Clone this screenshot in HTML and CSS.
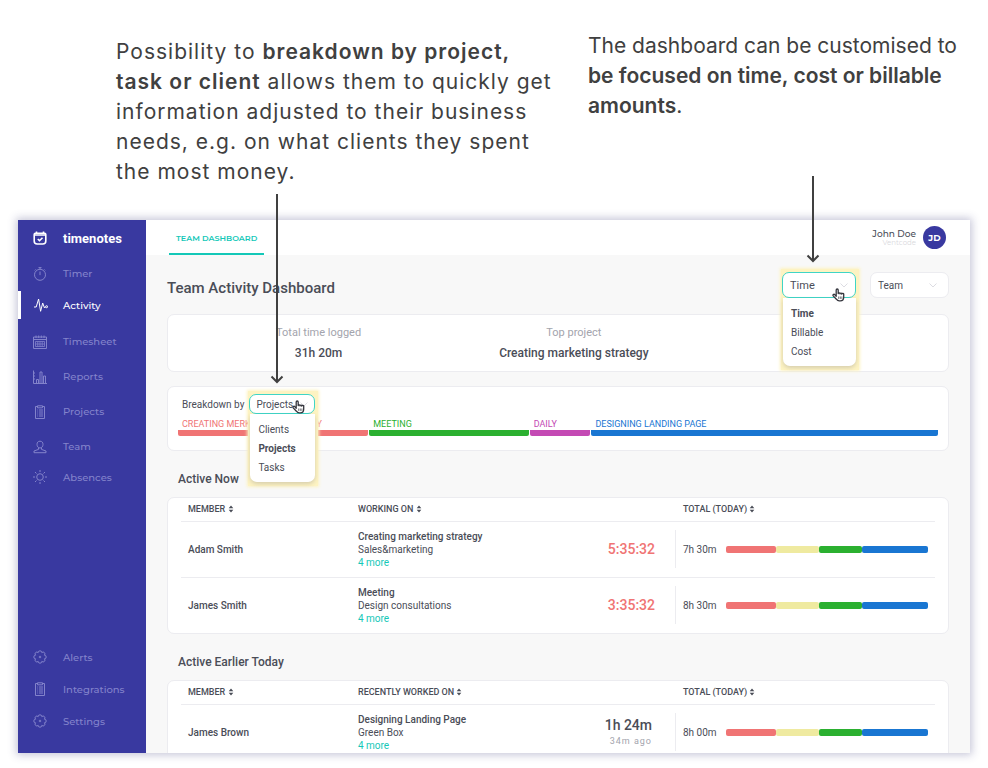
FILE: index.html
```
<!DOCTYPE html>
<html lang="en">

<head>
    <meta charset="UTF-8">
    <meta name="viewport" content="width=device-width, initial-scale=1.0">
    <title>Timenotes - Team Activity Dashboard</title>
    <link rel="stylesheet" href="styles.css">
</head>

<body>
    <svg class="sprite" aria-hidden="true">
        <symbol id="icon-sort" viewBox="0 0 6 8">
            <path d="M3 0.5L5.3 3.2H0.7zM3 7.5L5.3 4.8H0.7z" fill="currentColor" />
        </symbol>
        <symbol id="icon-clipboard" viewBox="0 0 14 14">
            <path d="M4.5 1.5h-2v12h9v-12h-2M4.5 0.8h5v2h-5zM4.3 5h0.8M6 5h4M4.3 7h0.8M6 7h4M4.3 9h0.8M6 9h4M4.3 11h0.8M6 11h4" />
        </symbol>
        <symbol id="icon-gear" viewBox="0 0 14 14">
            <path d="M11.4 8.8A1.800 1.800 0 0 1 8.800 11.400A1.800 1.800 0 0 1 5.200 11.400A1.800 1.800 0 0 1 2.600 8.800A1.800 1.800 0 0 1 2.600 5.200A1.800 1.800 0 0 1 5.200 2.600A1.800 1.800 0 0 1 8.800 2.600A1.800 1.800 0 0 1 11.400 5.200A1.800 1.800 0 0 1 11.400 8.800z" />
            <circle cx="7" cy="7" r="0.8" />
        </symbol>
        <symbol id="icon-hand" viewBox="0 0 13 14">
            <path d="M4.2 8.2V2a1 1 0 0 1 2 0v3.6a.9.9 0 0 1 1.8.2 .9.9 0 0 1 1.8.3 .9.9 0 0 1 1.9.5v2.6c0 2-1.4 3.6-3.4 3.6H7.2c-1.3 0-2.1-.6-2.8-1.6L1.2 7.9a1 1 0 0 1 1.5-1.3z" fill="#fff" stroke="#33343c" stroke-width="1.3" stroke-linejoin="round" />
            <path d="M6.7 8.5v2.4M8.3 8.5v2.4M9.9 8.5v2.4" stroke="#33343c" stroke-width="0.7" />
        </symbol>
    </svg>

    <div class="notes">
        <div class="note note-breakdown">
            <p>Possibility to <strong>breakdown by project, task or client</strong> allows them to quickly get information adjusted to their business needs, e.g. on what clients they spent the most money.</p>
            <svg class="arrow arrow-breakdown" viewBox="0 0 14 190">
                <path d="M7 0v188M1.5 182.5L7 188l5.500-5.500" />
            </svg>
        </div>
        <div class="note note-focus">
            <p>The dashboard can be customised to <strong>be focused on time, cost or billable amounts</strong>.</p>
            <svg class="arrow arrow-focus" viewBox="0 0 14 87">
                <path d="M7 0v85M1.5 79.500L7 85l5.500-5.500" />
            </svg>
        </div>
    </div>

    <div class="app">
        <nav class="sidebar">
            <a class="brand" href="#">
                <svg class="icon" viewBox="0 0 14 14">
                    <path d="M3.500 0.500v2M10.500 0.500v2M2.500 2.300h9q1.300 0 1.300 1.300v6.400q0 3-3 3H4.200q-3 0-3-3V3.600q0-1.300 1.300-1.300zM1.500 4h11M4.800 8l1.700 1.700 3-3" stroke-width="1.6" />
                </svg>
                timenotes
            </a>
            <ul class="menu menu-main">
                <li><a href="#">
                    <svg class="icon" viewBox="0 0 14 14">
                        <circle cx="7" cy="7.800" r="5.500" />
                        <path d="M5.500 0.600h3M7 0.600v1.700M7 4.500v3.600M1.800 3.400l1-1M12.200 3.400l-1-1" />
                    </svg>Timer</a></li>
                <li><a class="active" href="#">
                    <svg class="icon" viewBox="0 0 14 14">
                        <path d="M0 9h2.200L4.600 1l2 12.300L8.700 5l1.800 5 1.200-1.300" />
                        <circle cx="12.600" cy="8.700" r="1" />
                    </svg>Activity</a></li>
                <li><a href="#">
                    <svg class="icon" viewBox="0 0 14 14">
                        <path d="M0.500 2h13v11.500h-13zM0.500 4.500h13M3 0.500v2.500M5.700 0.500v2.500M8.300 0.500v2.500M11 0.500v2.500" />
                        <path d="M2.500 6.500h9v5h-9zM2.500 9h9M4.800 6.500v5M7 6.500v5M9.200 6.500v5" stroke-width="0.8" />
                    </svg>Timesheet</a></li>
                <li><a href="#">
                    <svg class="icon" viewBox="0 0 14 14">
                        <path d="M0.500 0.500v13h13.500M0.500 3h1.500M0.500 6h1.500M0.500 9h1.500M3.500 13.500V9.500h2v4M7 13.500V2h2v11.500M10.500 13.500V6h2v7.500" />
                    </svg>Reports</a></li>
                <li><a href="#"><svg class="icon"><use href="#icon-clipboard" /></svg>Projects</a></li>
                <li><a href="#">
                    <svg class="icon" viewBox="0 0 14 14">
                        <path d="M7 1.200c2 0 3 1.300 3 3.200S8.800 8 7 8 4 6.300 4 4.400s1-3.200 3-3.200zM5.500 7.800v1.600L1 11v1.700h12V11L8.500 9.400V7.800" />
                    </svg>Team</a></li>
                <li><a href="#">
                    <svg class="icon" viewBox="0 0 14 14">
                        <circle cx="7" cy="7" r="3.300" />
                        <path d="M7 0v2M7 12v2M0 7h2M12 7h2M2 2l1.500 1.500M10.500 10.500L12 12M2 12l1.500-1.500M10.500 3.500L12 2" />
                    </svg>Absences</a></li>
            </ul>
            <ul class="menu menu-bottom">
                <li><a href="#"><svg class="icon"><use href="#icon-gear" /></svg>Alerts</a></li>
                <li><a href="#"><svg class="icon"><use href="#icon-clipboard" /></svg>Integrations</a></li>
                <li><a href="#"><svg class="icon"><use href="#icon-gear" /></svg>Settings</a></li>
            </ul>
        </nav>

        <div class="page">
            <header class="topbar">
                <a class="tab" href="#">TEAM DASHBOARD</a>
                <div class="user">
                    <div class="user-text">
                        <div class="user-name">John Doe</div>
                        <div class="user-company">Ventcode</div>
                    </div>
                    <div class="avatar">JD</div>
                </div>
            </header>

            <main class="content">
                <div class="title-row">
                    <h1>Team Activity Dashboard</h1>
                    <div class="filters">
                        <div class="dropdown dropdown-focus">
                            <button class="select open" type="button">Time
                                <svg class="chevron" viewBox="0 0 8 5"><path d="M0.500 0.500L4 4l3.500-3.500" /></svg>
                            </button>
                            <ul class="options">
                                <li><button class="selected" type="button">Time</button></li>
                                <li><button type="button">Billable</button></li>
                                <li><button type="button">Cost</button></li>
                            </ul>
                            <svg class="hand"><use href="#icon-hand" /></svg>
                        </div>
                        <button class="select" type="button">Team
                            <svg class="chevron" viewBox="0 0 8 5"><path d="M0.500 0.500L4 4l3.500-3.500" /></svg>
                        </button>
                    </div>
                </div>

                <section class="card summary">
                    <div class="stat">
                        <div class="stat-label">Total time logged</div>
                        <div class="stat-value">31h 20m</div>
                    </div>
                    <div class="stat">
                        <div class="stat-label">Top project</div>
                        <div class="stat-value">Creating marketing strategy</div>
                    </div>
                </section>

                <section class="card breakdown">
                    <div class="breakdown-head">
                        <span>Breakdown by</span>
                        <div class="dropdown dropdown-breakdown">
                            <button class="select open" type="button">Projects
                                <svg class="chevron" viewBox="0 0 8 5"><path d="M0.500 0.500L4 4l3.500-3.500" /></svg>
                            </button>
                            <ul class="options">
                                <li><button type="button">Clients</button></li>
                                <li><button class="selected" type="button">Projects</button></li>
                                <li><button type="button">Tasks</button></li>
                            </ul>
                            <svg class="hand"><use href="#icon-hand" /></svg>
                        </div>
                    </div>
                    <div class="split">
                        <div class="part red" style="flex-grow: 191">CREATING MERKETING STRATEGY</div>
                        <div class="part green" style="flex-grow: 160">MEETING</div>
                        <div class="part purple" style="flex-grow: 61">DAILY</div>
                        <div class="part blue" style="flex-grow: 348">DESIGNING LANDING PAGE</div>
                    </div>
                </section>

                <h2>Active Now</h2>
                <section class="card">
                    <table>
                        <thead>
                            <tr>
                                <th class="col-member">MEMBER <svg class="sort"><use href="#icon-sort" /></svg></th>
                                <th class="col-work">WORKING ON <svg class="sort"><use href="#icon-sort" /></svg></th>
                                <th class="col-time"></th>
                                <th>TOTAL (TODAY) <svg class="sort"><use href="#icon-sort" /></svg></th>
                            </tr>
                        </thead>
                        <tbody>
                            <tr>
                                <td class="member">Adam Smith</td>
                                <td>
                                    <div class="task">Creating marketing strategy</div>
                                    <div>Sales&amp;marketing</div>
                                    <a class="more" href="#">4 more</a>
                                </td>
                                <td class="timer">5:35:32</td>
                                <td>
                                    <div class="total">7h 30m
                                        <div class="bar"><i class="red" style="flex-grow: 51"></i><i class="yellow" style="flex-grow: 43"></i><i class="green" style="flex-grow: 43"></i><i class="blue" style="flex-grow: 66"></i></div>
                                    </div>
                                </td>
                            </tr>
                            <tr>
                                <td class="member">James Smith</td>
                                <td>
                                    <div class="task">Meeting</div>
                                    <div>Design consultations</div>
                                    <a class="more" href="#">4 more</a>
                                </td>
                                <td class="timer">3:35:32</td>
                                <td>
                                    <div class="total">8h 30m
                                        <div class="bar"><i class="red" style="flex-grow: 51"></i><i class="yellow" style="flex-grow: 43"></i><i class="green" style="flex-grow: 43"></i><i class="blue" style="flex-grow: 66"></i></div>
                                    </div>
                                </td>
                            </tr>
                        </tbody>
                    </table>
                </section>

                <h2>Active Earlier Today</h2>
                <section class="card">
                    <table>
                        <thead>
                            <tr>
                                <th class="col-member">MEMBER <svg class="sort"><use href="#icon-sort" /></svg></th>
                                <th class="col-work">RECENTLY WORKED ON <svg class="sort"><use href="#icon-sort" /></svg></th>
                                <th class="col-time"></th>
                                <th>TOTAL (TODAY) <svg class="sort"><use href="#icon-sort" /></svg></th>
                            </tr>
                        </thead>
                        <tbody>
                            <tr>
                                <td class="member">James Brown</td>
                                <td>
                                    <div class="task">Designing Landing Page</div>
                                    <div>Green Box</div>
                                    <a class="more" href="#">4 more</a>
                                </td>
                                <td class="timer done">1h 24m
                                    <div class="ago">34m ago</div>
                                </td>
                                <td>
                                    <div class="total">8h 00m
                                        <div class="bar"><i class="red" style="flex-grow: 51"></i><i class="yellow" style="flex-grow: 43"></i><i class="green" style="flex-grow: 43"></i><i class="blue" style="flex-grow: 66"></i></div>
                                    </div>
                                </td>
                            </tr>
                        </tbody>
                    </table>
                </section>
            </main>
        </div>
    </div>
</body>

</html>
```
FILE: styles.css
```
* {
    box-sizing: border-box;
}

body {
    margin: 0;
    height: 100vh;
    min-height: 640px;
    padding: 0 18px 15px;
    display: flex;
    flex-direction: column;
    background: #fff;
    color: #4a4d57;
    font-family: Roboto, sans-serif;
    font-size: 10px;
    overflow: hidden;
}

a {
    color: inherit;
    text-decoration: none;
}

ul {
    list-style: none;
    margin: 0;
    padding: 0;
}

button {
    font-family: inherit;
    color: inherit;
    background: none;
    border: none;
    padding: 0;
    cursor: pointer;
}

svg {
    fill: none;
    stroke: currentColor;
    flex-shrink: 0;
}

.sprite {
    position: absolute;
    width: 0;
    height: 0;
}

/* Notes above the app */
.notes {
    flex: 0 0 220px;
    display: grid;
    grid-template-columns: 440px 1fr;
    column-gap: 32px;
    padding-left: 98px;
    font-family: Inter, sans-serif;
    font-size: 21px;
    line-height: 30px;
    color: #404040;
}

.note {
    position: relative;
}

.note p {
    margin: 0;
}

.note strong {
    font-weight: 600;
}

.note-breakdown {
    padding-top: 37px;
    letter-spacing: 1px;
}

.note-focus {
    padding-top: 31px;
}

.arrow {
    position: absolute;
    width: 14px;
    z-index: 5;
    stroke-width: 2;
}

.arrow-breakdown {
    top: 194px;
    left: 154px;
    height: 190px;
}

.arrow-focus {
    top: 176px;
    left: 218px;
    height: 87px;
}

/* App window */
.app {
    flex: 1;
    min-height: 0;
    display: flex;
    background: #f8f8f8;
    box-shadow: 0 0 8px 2px rgba(70, 70, 130, 0.3);
}

.sidebar {
    flex: 0 0 128px;
    display: flex;
    flex-direction: column;
    padding-bottom: 16px;
    background: #3939a0;
    color: #8383cb;
    font-family: Montserrat, Inter, sans-serif;
    font-size: 10px;
    font-weight: 500;
}

.icon {
    width: 14px;
    height: 14px;
}

.brand {
    display: flex;
    align-items: center;
    gap: 16px;
    height: 36px;
    padding-left: 15px;
    color: #fff;
    font-family: Roboto, sans-serif;
    font-size: 13px;
    font-weight: 700;
}

.menu a {
    display: flex;
    align-items: center;
    gap: 16px;
    height: 35px;
    padding-left: 15px;
}

.menu .active {
    color: #fff;
    border-left: 3px solid #fff;
    padding-left: 13px;
    gap: 15px;
    height: 28px;
    margin-bottom: 5px;
}

.menu-main li:last-child a {
    height: 26px;
}

.menu-bottom {
    margin-top: auto;
}

.menu-bottom a {
    height: 32px;
}

.page {
    flex: 1;
    min-width: 0;
    display: flex;
    flex-direction: column;
}

.topbar {
    flex: 0 0 35px;
    display: flex;
    justify-content: space-between;
    padding: 0 24px 0 23px;
    background: #fff;
    font-family: Montserrat, Inter, sans-serif;
}

.tab {
    display: flex;
    align-items: center;
    padding: 2px 7px 0;
    border-bottom: 2px solid #14c8b8;
    color: #14c8b8;
    font-size: 8px;
    font-weight: 600;
}

.user {
    display: flex;
    align-items: center;
    gap: 7px;
    text-align: right;
}

.user-name {
    font-size: 9px;
    line-height: 11px;
    font-weight: 500;
}

.user-company {
    font-size: 7px;
    line-height: 8px;
    color: #d9d9dd;
}

.avatar {
    width: 23px;
    height: 23px;
    border-radius: 50%;
    background: #3939a0;
    color: #fff;
    font-size: 9px;
    font-weight: 700;
    line-height: 23px;
    text-align: center;
}

.content {
    flex: 1;
    min-height: 0;
    padding: 17px 21px 0;
    overflow: hidden;
}

.title-row {
    display: flex;
    justify-content: space-between;
    align-items: flex-start;
    margin-bottom: 10px;
}

h1 {
    margin: 0;
    font-size: 15px;
    line-height: 32px;
    font-weight: 500;
}

h2 {
    margin: 19px 11px 9px;
    font-size: 12px;
    line-height: 18px;
    font-weight: 500;
}

.filters {
    display: flex;
    gap: 14px;
}

.select {
    display: flex;
    align-items: center;
    justify-content: space-between;
    width: 79px;
    height: 26px;
    padding: 0 11px 0 7px;
    border: 1px solid #ececf0;
    border-radius: 7px;
    background: #fff;
    font-size: 10px;
}

.select.open {
    border-color: #3fd5c6;
}

.chevron {
    width: 8px;
    height: 5px;
    color: #dcdce2;
}

.dropdown {
    position: relative;
    z-index: 2;
}

.dropdown-focus .select {
    width: 74px;
    padding-right: 7px;
    font-size: 11px;
}

.dropdown-breakdown .select {
    width: 66px;
    height: 20px;
    padding: 0 6px;
}

.options {
    position: absolute;
    top: 100%;
    left: 1px;
    right: 0;
    padding: 6px 0 5px;
    border-radius: 0 0 7px 7px;
    background: #fff;
    box-shadow: 0 2px 4px rgba(60, 60, 90, 0.2);
}

/* Yellow glow around an open dropdown */
.dropdown::before {
    content: '';
    position: absolute;
    inset: -3px -3px -72px -1px;
    background: #fdf3c2;
    box-shadow: 0 0 3px 1px #fdf3c2;
}

.dropdown .select {
    position: relative;
}

.options button {
    display: block;
    width: 100%;
    padding-left: 8px;
    font-size: 10px;
    line-height: 19px;
    text-align: left;
}

.options .selected {
    font-weight: 700;
}

.hand {
    position: absolute;
    width: 13px;
    height: 14px;
    top: 16px;
    left: 50px;
}

.dropdown-breakdown .hand {
    top: 6px;
    left: 43px;
}

.card {
    border: 1px solid #ececf0;
    border-radius: 7px;
    background: #fff;
}

.summary {
    display: flex;
    gap: 138px;
    padding: 7px 0 7px 108px;
    margin-bottom: 14px;
    text-align: center;
}

.stat {
    line-height: 21px;
}

.stat-label {
    font-size: 11px;
    color: #a3a4ad;
}

.stat-value {
    font-size: 12px;
    font-weight: 500;
}

.breakdown {
    padding: 7px 10px 14px;
}

.breakdown-head {
    display: flex;
    align-items: center;
    gap: 5px;
    padding-left: 4px;
    margin-bottom: 4px;
}

.split {
    display: flex;
    gap: 1px;
}

.part {
    flex: 1 1 0;
    min-width: 0;
    text-indent: 4px;
    border-bottom: 6px solid currentColor;
    border-radius: 2px;
    font-size: 9px;
    line-height: 12px;
    white-space: nowrap;
}

.part.red {
    color: #f07474;
}

.part.green {
    color: #2bb030;
}

.part.purple {
    color: #c44ab4;
}

.part.blue {
    color: #1976d2;
}

/* Tables */
table {
    width: calc(100% - 26px);
    margin: 0 13px;
    table-layout: fixed;
    border-collapse: collapse;
    text-align: left;
}

th {
    height: 23px;
    padding: 0 0 0 8px;
    font-size: 9px;
    font-weight: 500;
}

td {
    height: 56px;
    padding: 0 0 0 8px;
    border-top: 1px solid #ececf0;
    line-height: 13px;
}

.col-member {
    width: 169px;
}

.col-work {
    width: 226px;
}

.col-time {
    width: 99px;
}

.sort {
    width: 6px;
    height: 8px;
    stroke: none;
    vertical-align: -1px;
}

.col-member,
.member {
    padding-left: 7px;
}

.member,
.task {
    font-weight: 500;
}

.more {
    color: #14c8b8;
}

.timer {
    padding: 0 20px 0 0;
    color: #f07474;
    font-size: 14px;
    font-weight: 500;
    text-align: right;
    white-space: nowrap;
}

.timer.done {
    padding-right: 23px;
    color: #4a4d57;
    line-height: 17px;
}

.ago {
    color: #a3a4ad;
    font-size: 9px;
    font-weight: 400;
    line-height: 14px;
    letter-spacing: 1px;
}

.total {
    display: flex;
    align-items: center;
    gap: 9px;
    height: 38px;
    margin-left: -8px;
    padding: 0 7px;
    border-left: 1px solid #ececf0;
}

.bar {
    flex: 1;
    display: flex;
    height: 7px;
}

.bar i {
    flex: 1 1 0;
    border-radius: 2px;
}

i.red {
    background: #f07474;
}

i.yellow {
    background: #efeaa0;
}

i.green {
    background: #2bb030;
}

i.blue {
    background: #1976d2;
}
```
